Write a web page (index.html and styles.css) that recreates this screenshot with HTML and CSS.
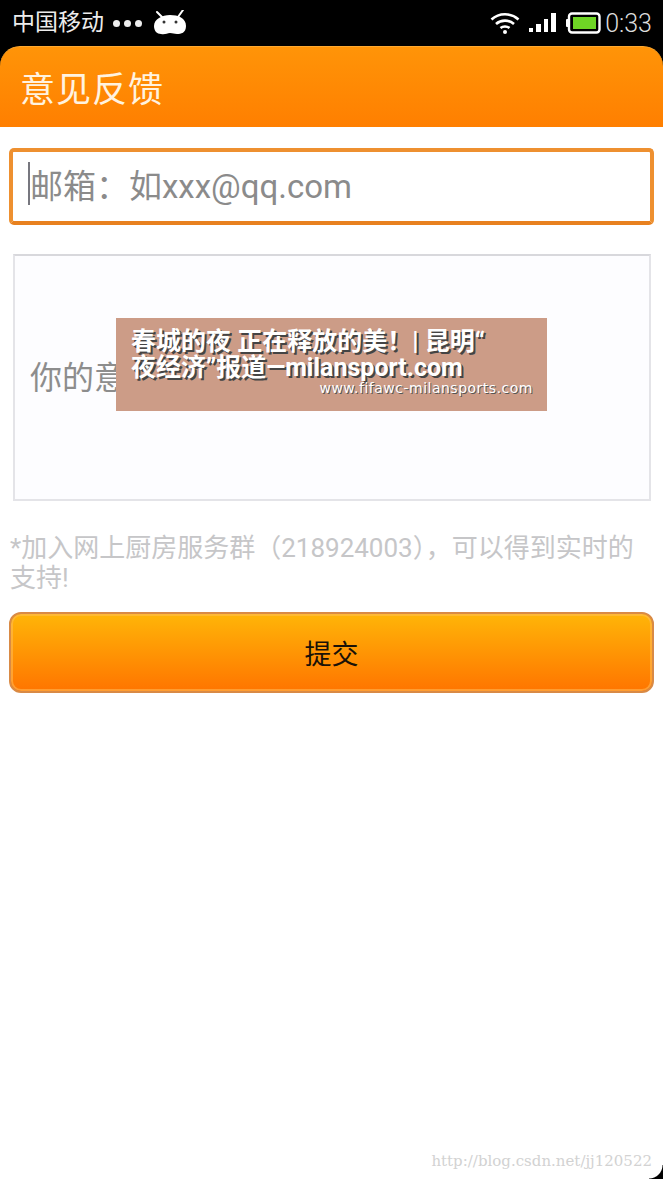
FILE: index.html
```html
<!DOCTYPE html>
<html lang="zh">
<head>
<meta charset="utf-8">
<title>意见反馈</title>
<link rel="stylesheet" href="styles.css">
</head>
<body>
<div class="screen">
  <div class="statusbar">
    <div class="status-left">
      <span class="carrier">中国移动</span>
      <span class="dots"><i></i><i></i><i></i></span>
      <svg class="android" width="34" height="26" viewBox="0 0 34 26"><path d="M4 2l5 5M30 0l-5 7" stroke="#fff" stroke-width="2" stroke-linecap="round"/><path d="M1 16C1 9 9 5 17 5s16 3 16 11c0 7-5 8-9 8-3 0-4-1-7-1s-5 2-9 1c-4 0-7-3-7-8z" fill="#fff"/><circle cx="11" cy="12" r="1.5" fill="#333"/><circle cx="23" cy="12" r="1.5" fill="#333"/></svg>
    </div>
    <div class="status-right">
      <svg width="30" height="24" viewBox="0 0 30 24" fill="none" stroke="#fff" stroke-width="2.6"><path d="M1.5 8.5C9 1.500 21 1.500 28.500 8.500"/><path d="M6 13c5-4.500 13-4.500 18 0"/><path d="M10.500 17c2.500-2 6.500-2 9 0"/><circle cx="15" cy="21" r="2" fill="#fff" stroke="none"/></svg>
      <svg class="signal" width="28" height="24" viewBox="0 0 28 24" fill="#fff"><rect x="0" y="17" width="4" height="4"/><rect x="7" y="13" width="5" height="8"/><rect x="15" y="8" width="4" height="13"/><rect x="22" y="2" width="5" height="19"/></svg>
      <svg class="battery" width="35" height="22" viewBox="0 0 35 22"><rect x="3" y="1.500" width="30.500" height="19" rx="3" fill="none" stroke="#fff" stroke-width="2.400"/><rect x="0" y="7" width="3" height="8" rx="1" fill="#fff"/><rect x="7" y="5" width="23" height="12" fill="#6fd625"/></svg>
      <span class="clock">0:33</span>
    </div>
  </div>
  <header class="appbar"><h1>意见反馈</h1></header>
  <main class="form">
    <div class="email"><span class="caret"></span><span>邮箱：如xxx@qq.com</span></div>
    <div class="opinion">你的意见</div>
    <p class="hint">*加入网上厨房服务群（218924003），可以得到实时的支持!</p>
    <button class="submit" type="button">提交</button>
  </main>
  <div class="ad">
    <div class="ad-title">春城的夜 正在释放的美！| 昆明“<br>夜经济”报道—milansport.com</div>
    <div class="ad-url">www.fifawc-milansports.com</div>
  </div>
  <div class="credit">http://blog.csdn.net/jj120522</div>
  <div class="corner"></div>
</div>
</body>
</html>
```
FILE: styles.css
```css
* { box-sizing: border-box; }
html, body { margin: 0; padding: 0; }
body { background: #000; font-family: "Roboto", "Noto Sans CJK SC", sans-serif; }
.screen { position: relative; width: 663px; height: 1179px; overflow: hidden; background: #000; }

.statusbar { height: 46px; display: flex; align-items: center; justify-content: space-between; color: #ececec; padding: 0 11px 0 12px; }
.status-left { display: flex; align-items: center; }
.carrier { font-size: 23px; line-height: 46px; letter-spacing: 0; }
.dots { display: flex; gap: 4px; margin-left: 9px; }
.dots i { width: 7px; height: 7px; border-radius: 50%; background: #eee; }
.android { margin-left: 11px; }
.status-right { display: flex; align-items: center; gap: 5px; }
.signal { margin-left: 4px; }
.battery { margin-left: 4px; }
.clock { font-size: 25px; font-weight: 300; margin-left: -1px; color: #ddd; }

.appbar { height: 81px; border-radius: 20px 20px 0 0; background: linear-gradient(#ff9408, #ff7f00); border-top: 1px solid #ffa930; padding-left: 20px; display: flex; align-items: center; }
.appbar h1 { margin: 0 0 0 0; padding-bottom: 2px; font-size: 35px; font-weight: 400; color: #fff3e0; letter-spacing: 1px; }

.form { height: 1052px; background: #fff; padding: 21px 9px 0; display: flex; flex-direction: column; }
.email { height: 77px; border: 4px solid #ee9030; border-bottom-color: #e8811f; border-radius: 5px; background: #fff; display: flex; align-items: center; padding: 0 0 6px 15px; font-size: 33px; color: #8b8b8b; }
.caret { width: 2px; height: 43px; background: #77777f; margin-right: 0; }
.opinion { margin: 29px 3px 0 4px; height: 247px; border: 2px solid #e4e4e8; border-top-color: #d8d8dc; background: #fdfdff; padding: 100px 0 0 15px; font-size: 32px; line-height: 44px; color: #8d8d8d; }
.hint { margin: 32px 0 0 1px; font-size: 26px; line-height: 30px; color: #c6c6c8; }
.submit { margin-top: 19px; height: 81px; border: 2px solid #d98a45; border-radius: 12px; background: linear-gradient(#ffb508, #ff7500); box-shadow: inset 0 0 0 2px rgba(255,190,90,.55); font: 400 27px "Noto Sans CJK SC", sans-serif; color: #1a1208; padding: 0; }

.ad { position: absolute; left: 116px; top: 318px; width: 431px; height: 93px; background: #cc9c87; padding: 11px 0 0 15px; color: #fff; text-shadow: 2px 2px 0 #444; }
.ad-title { font-size: 25px; line-height: 26px; font-weight: 700; white-space: nowrap; }
.ad-url { font-family: "DejaVu Sans", sans-serif; font-size: 14px; line-height: 16px; text-align: right; padding-right: 14px; margin-top: -1px; text-shadow: 1px 1px 0 #555; letter-spacing: .5px; white-space: nowrap; }

.credit { position: absolute; right: 11px; top: 1151px; font-family: "DejaVu Serif", "Liberation Serif", serif; font-size: 15px; line-height: 20px; color: #d2d2d2; white-space: nowrap; }
.corner { position: absolute; right: 0; bottom: 0; width: 14px; height: 14px; background: radial-gradient(circle at 0 0, transparent 13px, #000 14px); }
```
